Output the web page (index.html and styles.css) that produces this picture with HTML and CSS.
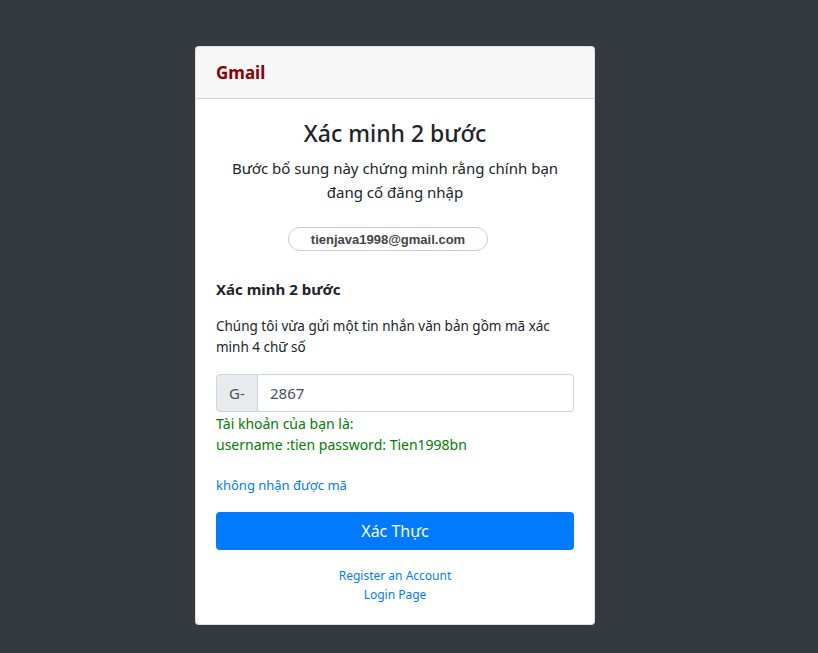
FILE: index.html
```html
<!DOCTYPE html>
<html lang="vi">
<head>
<meta charset="utf-8">
<title>Xác minh 2 bước</title>
<link rel="stylesheet" href="styles.css">
</head>
<body>
<div class="page">
  <div class="card">
    <div class="card-header">Gmail</div>
    <div class="card-body">
      <h3 class="title">Xác minh 2 bước</h3>
      <p class="subtitle">Bước bổ sung này chứng minh rằng chính bạn đang cố đăng nhập</p>
      <div class="email-row"><span class="email-pill">tienjava1998@gmail.com</span></div>
      <h5 class="section-title">Xác minh 2 bước</h5>
      <p class="desc">Chúng tôi vừa gửi một tin nhắn văn bản gồm mã xác minh 4 chữ số</p>
      <div class="input-group">
        <span class="prepend">G-</span>
        <input class="code-input" type="text" value="2867">
      </div>
      <div class="account">Tài khoản của bạn là:<br>username :tien password: Tien1998bn</div>
      <a class="resend" href="#">không nhận được mã</a>
      <button class="btn-verify" type="button">Xác Thực</button>
      <div class="footer-links">
        <a href="#">Register an Account</a>
        <a href="#">Login Page</a>
      </div>
    </div>
  </div>
</div>
</body>
</html>
```
FILE: styles.css
```css
html, body {
  margin: 0;
  padding: 0;
  height: 100%;
}
body {
  background: #343a40;
  font-family: "Noto Sans", "Open Sans", sans-serif;
  color: #212529;
}
.page {
  padding: 46px 0 0 195px;
}
.card {
  width: 400px;
  box-sizing: border-box;
  background: #fff;
  border: 1px solid rgba(0, 0, 0, 0.125);
  border-radius: 4px;
  overflow: hidden;
}
.card-header {
  height: 52px;
  box-sizing: border-box;
  display: flex;
  align-items: center;
  padding: 0 20px;
  background: #f7f7f7;
  border-bottom: 1px solid rgba(0, 0, 0, 0.125);
  color: #8b0000;
  font-weight: 700;
  font-size: 17px;
}
.card-body {
  padding: 20px;
  display: flex;
  flex-direction: column;
}
.title {
  margin: 0 0 8px;
  text-align: center;
  font-size: 23px;
  font-weight: 500;
  line-height: 29px;
}
.subtitle {
  margin: 0;
  text-align: center;
  font-size: 15px;
  line-height: 24px;
  padding: 0 12px;
}
.email-row {
  margin-top: 23px;
  padding-left: 72px;
  display: flex;
}
.email-pill {
  width: 200px;
  height: 24px;
  box-sizing: border-box;
  border: 1px solid #ccc;
  border-radius: 12px;
  font-family: "Liberation Sans", Arial, sans-serif;
  font-weight: 700;
  font-size: 13px;
  color: #444;
  display: flex;
  align-items: center;
  justify-content: center;
}
.section-title {
  margin: 26px 0 15px;
  font-size: 15px;
  font-weight: 700;
  line-height: 24px;
}
.desc {
  margin: 0 0 16px;
  font-size: 13.5px;
  line-height: 21px;
}
.input-group {
  display: flex;
  height: 38px;
}
.prepend {
  width: 42px;
  box-sizing: border-box;
  display: flex;
  align-items: center;
  justify-content: center;
  background: #e9ecef;
  border: 1px solid #ced4da;
  border-radius: 4px 0 0 4px;
  color: #495057;
  font-size: 15px;
}
.code-input {
  flex: 1;
  min-width: 0;
  box-sizing: border-box;
  height: 38px;
  border: 1px solid #ced4da;
  border-left: none;
  border-radius: 0 4px 4px 0;
  padding: 0 12px;
  font-family: inherit;
  font-size: 15px;
  color: #495057;
  outline: none;
}
.account {
  color: #008000;
  font-size: 14px;
  line-height: 21px;
  margin-top: 1px;
}
.resend {
  margin-top: 20px;
  align-self: flex-start;
  color: #007bff;
  text-decoration: none;
  font-size: 13px;
  line-height: 21px;
}
.btn-verify {
  margin-top: 16px;
  height: 38px;
  border: none;
  border-radius: 4px;
  background: #007bff;
  color: #fff;
  font-family: inherit;
  font-size: 16px;
  cursor: pointer;
}
.footer-links {
  margin-top: 16px;
  display: flex;
  flex-direction: column;
  align-items: center;
}
.footer-links a {
  color: #007bff;
  text-decoration: none;
  font-size: 12px;
  line-height: 19px;
}
```
